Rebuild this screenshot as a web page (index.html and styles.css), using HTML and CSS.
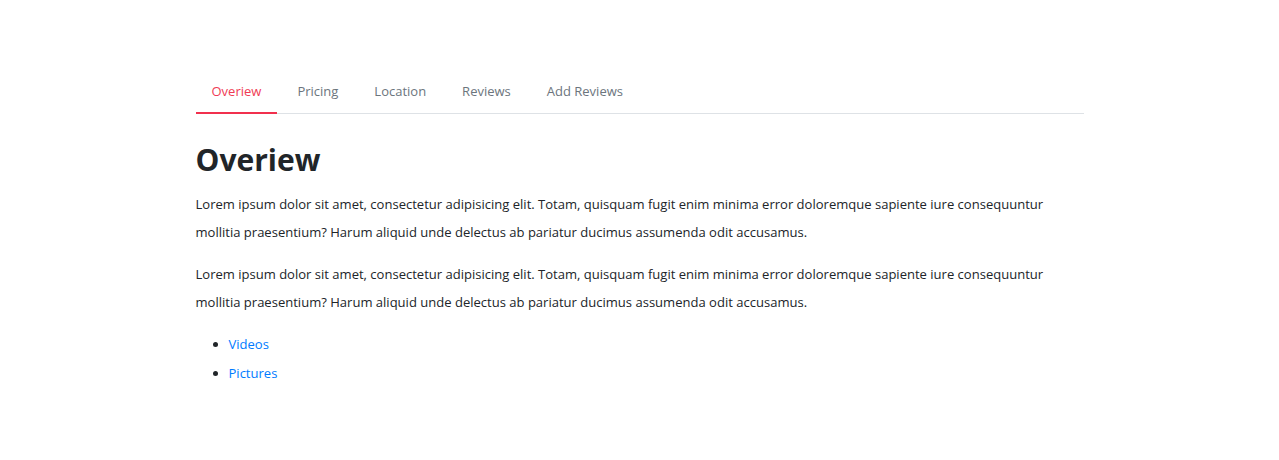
FILE: index.html
```html
<!DOCTYPE html>
<html lang="en">
<head>
<meta charset="utf-8">
<title>Overiew</title>
<link rel="stylesheet" href="styles.css">
</head>
<body>
<div class="wrap">
  <nav class="tabs">
    <a class="tab active" href="#">Overiew</a>
    <a class="tab" href="#">Pricing</a>
    <a class="tab" href="#">Location</a>
    <a class="tab" href="#">Reviews</a>
    <a class="tab" href="#">Add Reviews</a>
  </nav>
  <section class="content">
    <h2 class="title">Overiew</h2>
    <p>Lorem ipsum dolor sit amet, consectetur adipisicing elit. Totam, quisquam fugit enim minima error doloremque sapiente iure consequuntur mollitia praesentium? Harum aliquid unde delectus ab pariatur ducimus assumenda odit accusamus.</p>
    <p>Lorem ipsum dolor sit amet, consectetur adipisicing elit. Totam, quisquam fugit enim minima error doloremque sapiente iure consequuntur mollitia praesentium? Harum aliquid unde delectus ab pariatur ducimus assumenda odit accusamus.</p>
    <ul class="links">
      <li><a href="#">Videos</a></li>
      <li><a href="#">Pictures</a></li>
    </ul>
  </section>
</div>
</body>
</html>
```

FILE: styles.css
```css
html, body {
  margin: 0;
  padding: 0;
  background: #fff;
}
body {
  font-family: "Open Sans", "Noto Sans", "DejaVu Sans", sans-serif;
  font-size: 13.04px;
  color: #212529;
}
.wrap {
  width: 888px;
  margin: 0 auto;
  padding-top: 77px;
}
.tabs {
  display: flex;
  border-bottom: 1px solid #dee2e6;
}
.tab {
  display: block;
  padding: 0 16px;
  margin-right: 4px;
  line-height: 29px;
  color: #6c757d;
  text-decoration: none;
  font-size: 13px;
  margin-bottom: -1px;
  border-bottom: 2px solid transparent;
  box-sizing: border-box;
  height: 37px;
}
.tab.active {
  color: #ef3b55;
  border-bottom-color: #f1304d;
}
.content {
  padding-top: 28px;
}
.title {
  margin: 0 0 12px;
  font-size: 30px;
  font-weight: 700;
  line-height: 36px;
  color: #212529;
}
.content p {
  margin: 0 0 14px;
  line-height: 28px;
}
.links {
  margin: 0;
  padding-left: 33px;
  line-height: 29px;
}
.links a {
  color: #007bff;
  text-decoration: none;
}
```
